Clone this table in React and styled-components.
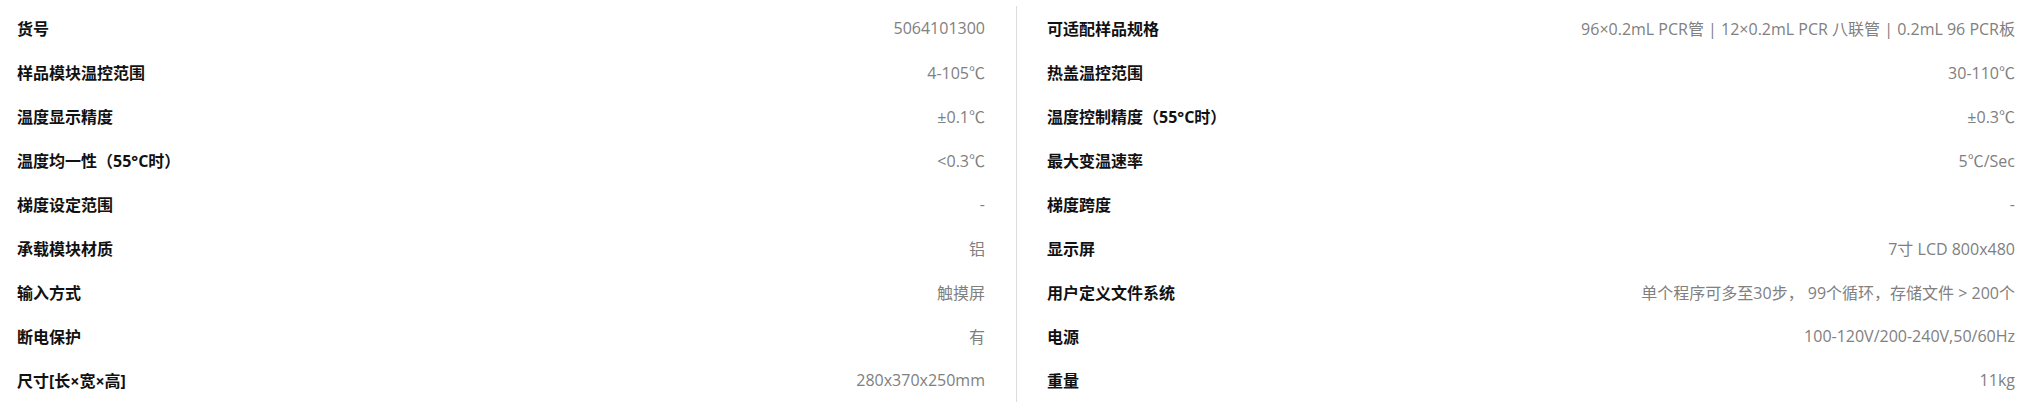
import styled, { createGlobalStyle } from "styled-components";

const GlobalStyle = createGlobalStyle`
  body {
    margin: 0;
    background: #fff;
    font-family: "Open Sans", "Noto Sans CJK SC", sans-serif;
  }
`;

const leftSpecs = [
  ["货号", "5064101300"],
  ["样品模块温控范围", "4-105℃"],
  ["温度显示精度", "±0.1℃"],
  ["温度均一性（55°C时）", "<0.3℃"],
  ["梯度设定范围", "-"],
  ["承载模块材质", "铝"],
  ["输入方式", "触摸屏"],
  ["断电保护", "有"],
  ["尺寸[长×宽×高]", "280x370x250mm"],
];

const rightSpecs = [
  ["可适配样品规格", "96×0.2mL PCR管 | 12×0.2mL PCR 八联管 | 0.2mL 96 PCR板"],
  ["热盖温控范围", "30-110℃"],
  ["温度控制精度（55°C时）", "±0.3℃"],
  ["最大变温速率", "5℃/Sec"],
  ["梯度跨度", "-"],
  ["显示屏", "7寸 LCD 800x480"],
  ["用户定义文件系统", "单个程序可多至30步， 99个循环，存储文件 > 200个"],
  ["电源", "100-120V/200-240V,50/60Hz"],
  ["重量", "11kg"],
];

function SpecColumn({ items, side }) {
  return (
    <Column $side={side}>
      {items.map(([label, value]) => (
        <Row key={label}>
          <Label>{label}</Label>
          <Value>{value}</Value>
        </Row>
      ))}
    </Column>
  );
}

export default function App() {
  return (
    <>
      <GlobalStyle />
      <SpecTable>
        <SpecColumn items={leftSpecs} side="left" />
        <SpecColumn items={rightSpecs} side="right" />
      </SpecTable>
    </>
  );
}

const SpecTable = styled.section`
  display: flex;
  width: 2024px;
  padding-top: 6px;
  box-sizing: border-box;
`;

const Column = styled.div`
  display: flex;
  flex-direction: column;
  box-sizing: border-box;
  width: ${(p) => (p.$side === "left" ? "1017px" : "auto")};
  flex: ${(p) => (p.$side === "left" ? "none" : "1")};
  padding: ${(p) => (p.$side === "left" ? "0 31px 0 17px" : "0 9px 0 30px")};
  border-right: ${(p) => (p.$side === "left" ? "1px solid #dcdcdc" : "none")};
`;

const Row = styled.div`
  display: flex;
  justify-content: space-between;
  align-items: center;
  height: 44px;
`;

const Label = styled.span`
  font-family: "Open Sans", "Noto Sans CJK SC", sans-serif;
  font-size: 16px;
  font-weight: 700;
  color: #111;
`;

const Value = styled.span`
  font-family: "Open Sans", "Noto Sans CJK SC", sans-serif;
  font-size: 16px;
  color: #808080;
`;
